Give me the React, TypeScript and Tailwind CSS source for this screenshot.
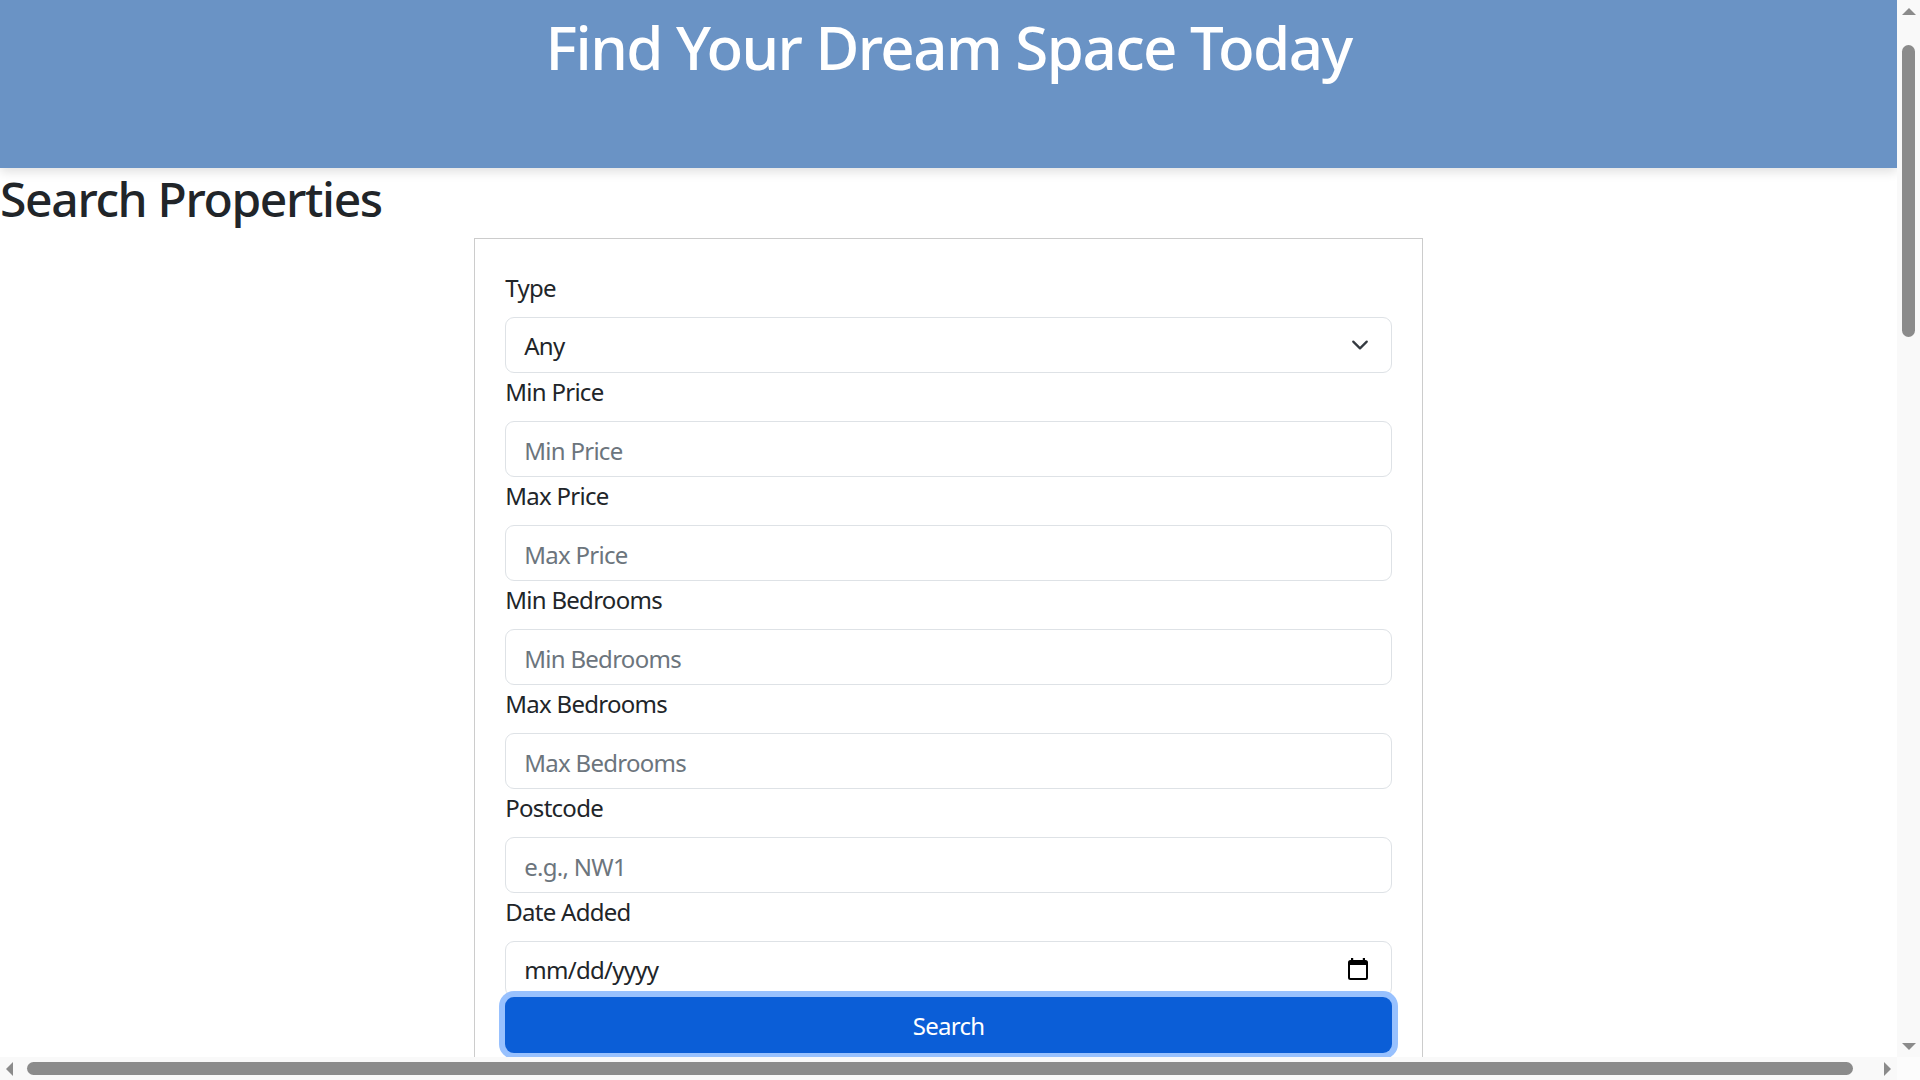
import React from "react";

const fields = [
  { label: "Min Price", placeholder: "Min Price" },
  { label: "Max Price", placeholder: "Max Price" },
  { label: "Min Bedrooms", placeholder: "Min Bedrooms" },
  { label: "Max Bedrooms", placeholder: "Max Bedrooms" },
  { label: "Postcode", placeholder: "e.g., NW1" },
];

function Label({ children }: { children: React.ReactNode }) {
  return (
    <div className="text-[24px] leading-[36px] pt-[1px] mb-[11px] text-[#212529] tracking-[-0.03em]">
      {children}
    </div>
  );
}

function Chevron() {
  return (
    <svg width="24" height="18" viewBox="0 0 16 16" fill="none">
      <path d="m2 5 6 6 6-6" stroke="#343a40" strokeWidth="2" strokeLinecap="round" strokeLinejoin="round" />
    </svg>
  );
}

function CalendarIcon() {
  return (
    <svg width="20" height="22" viewBox="0 0 20 22" fill="none">
      <rect x="3" y="0" width="2.2" height="4" fill="#000" />
      <rect x="14.8" y="0" width="2.2" height="4" fill="#000" />
      <rect x="1" y="3" width="18" height="18" rx="1.5" stroke="#000" strokeWidth="2" />
      <rect x="1" y="3" width="18" height="4" fill="#000" />
    </svg>
  );
}

export default function App() {
  return (
    <div
      className="w-screen h-screen overflow-hidden flex flex-col bg-white"
      style={{ fontFamily: '"Noto Sans", "Open Sans", sans-serif' }}
    >
      <div className="flex flex-1 min-h-0">
        <main className="flex-1 min-w-0 overflow-hidden">
          <header className="h-[168px] bg-[#6a93c5] pt-[11px] shadow-[0_4px_10px_rgba(0,0,0,0.12)]">
            <h1 className="text-center text-white text-[60px] leading-[72px] font-medium tracking-[-0.026em]">
              Find Your Dream Space Today
            </h1>
          </header>
          <h2 className="text-[48px] leading-[58px] font-medium text-[#212529] pt-[2px] mb-[10px] tracking-[-0.028em]">
            Search Properties
          </h2>
          <div className="w-1/2 mx-auto border border-[#cccccc] px-[30px] pt-[30px] pb-[30px]">
            <Label>Type</Label>
            <div className="h-[56px] border border-[#dee2e6] rounded-[9px] flex items-center justify-between pl-[18px] pr-[19px] text-[24px] text-[#212529]">
              <span className="pt-[2px] tracking-[-0.03em]">Any</span>
              <Chevron />
            </div>
            {fields.map((f) => (
              <div key={f.label}>
                <Label>{f.label}</Label>
                <input
                  placeholder={f.placeholder}
                  className="block w-full h-[56px] border border-[#dee2e6] rounded-[9px] px-[18px] pt-[2px] text-[24px] tracking-[-0.03em] text-[#212529] placeholder:text-[#6c757d] outline-none bg-white"
                />
              </div>
            ))}
            <Label>Date Added</Label>
            <div className="h-[56px] border border-[#dee2e6] rounded-[9px] flex items-center justify-between pl-[18px] pr-[23px] text-[24px] text-[#212529]">
              <span className="pt-[2px] tracking-[-0.03em]">mm/dd/yyyy</span>
              <CalendarIcon />
            </div>
            <button className="relative w-full h-[56px] pt-[2px] rounded-[9px] bg-[#0b5ed7] text-white text-[24px] tracking-[-0.03em] shadow-[0_0_0_6px_#98c1fe]">
              Search
            </button>
            <div className="h-[200px]" />
          </div>
        </main>
        <div className="w-[23px] bg-[#f9f9f9] flex flex-col items-center">
          <svg className="mt-[8px]" width="14" height="7" viewBox="0 0 14 7">
            <polygon points="7,0 14,7 0,7" fill="#8b8b8b" />
          </svg>
          <div className="mt-[30px] w-[13px] h-[292px] rounded-full bg-[#8b8b8b]" />
          <div className="flex-1" />
          <svg className="mb-[7px]" width="14" height="7" viewBox="0 0 14 7">
            <polygon points="0,0 14,0 7,7" fill="#8b8b8b" />
          </svg>
        </div>
      </div>
      <div className="h-[23px] flex">
        <div className="flex-1 bg-[#f9f9f9] flex items-center">
          <svg className="ml-[6px]" width="7" height="14" viewBox="0 0 7 14">
            <polygon points="7,0 7,14 0,7" fill="#8b8b8b" />
          </svg>
          <div className="ml-[14px] h-[13px] w-[1826px] rounded-full bg-[#8b8b8b]" />
          <div className="flex-1" />
          <svg className="mr-[6px]" width="7" height="14" viewBox="0 0 7 14">
            <polygon points="0,0 7,7 0,14" fill="#8b8b8b" />
          </svg>
        </div>
        <div className="w-[23px] bg-[#fcfcfc]" />
      </div>
    </div>
  );
}
